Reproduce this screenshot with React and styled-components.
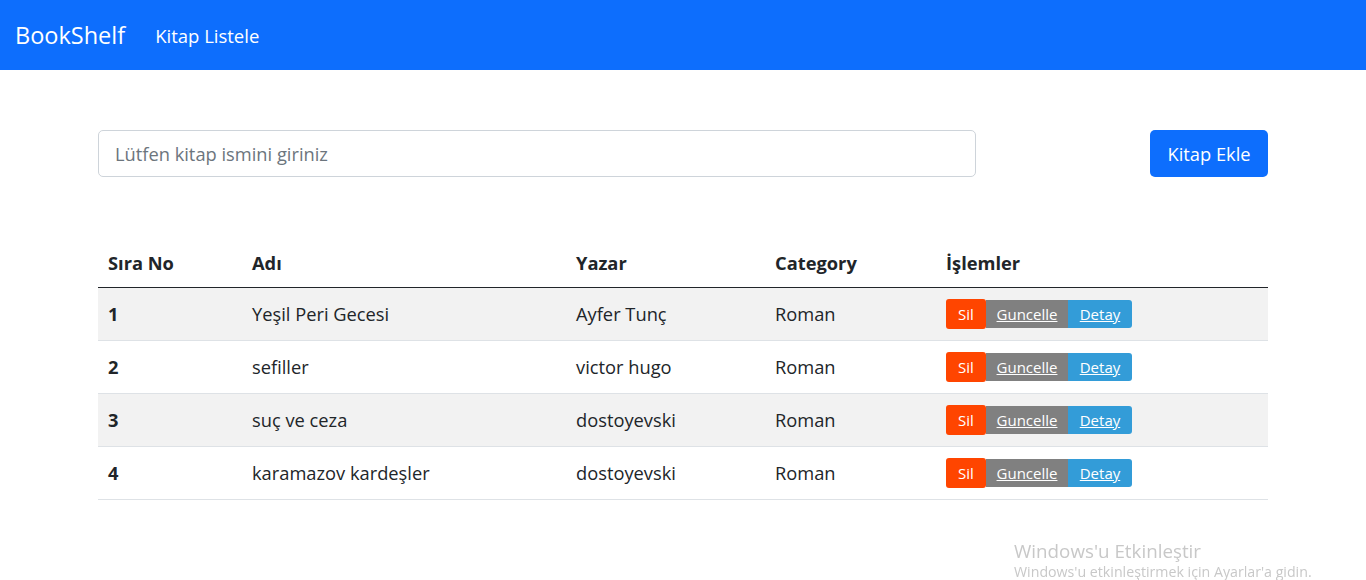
import React, { useState } from 'react';
import styled, { createGlobalStyle } from 'styled-components';

const GlobalStyle = createGlobalStyle`
  body {
    margin: 0;
    font-family: "Open Sans", "Noto Sans", sans-serif;
    color: #212529;
    background: #fff;
  }
`;

const Navbar = styled('nav')`
  height: 70px;
  background: #0d6efd;
  display: flex;
  align-items: center;
  padding: 0 15px;
  gap: 30px;
`;

const Brand = styled('span')`
  color: #fff;
  font-size: 23.5px;
`;

const NavLink = styled('span')`
  color: #fff;
  font-size: 18.5px;
`;

const Container = styled('div')`
  width: 1170px;
  margin: 60px auto 0;
`;

const SearchRow = styled('div')`
  display: flex;
  justify-content: space-between;
  align-items: center;
`;

const SearchInput = styled('input')`
  width: 878px;
  height: 47px;
  box-sizing: border-box;
  border: 1px solid #ced4da;
  border-radius: 5px;
  padding: 0 16px;
  font-family: inherit;
  font-size: 18.3px;
  color: #212529;
  outline: none;
  &::placeholder {
    color: #6c757d;
  }
`;

const AddButton = styled('button')`
  width: 118px;
  height: 47px;
  border: none;
  border-radius: 5px;
  background: #0d6efd;
  color: #fff;
  font-family: inherit;
  font-size: 18.3px;
  cursor: pointer;
`;

const Table = styled('table')`
  width: 100%;
  margin-top: 62px;
  border-collapse: collapse;
  table-layout: fixed;
  font-size: 18.3px;
`;

const Th = styled('th')`
  text-align: left;
  font-weight: 700;
  height: 48px;
  padding: 0 10px 1px;
  border-bottom: 1.5px solid #212529;
  box-sizing: border-box;
  width: ${(p) => p.$w || 'auto'};
`;

const Tr = styled('tr')`
  background: ${(p) => (p.$striped ? '#f2f2f2' : '#fff')};
`;

const Td = styled('td')`
  height: 52px;
  padding: 0 10px;
  border-bottom: 1px solid #dee2e6;
  font-weight: ${(p) => (p.$bold ? 700 : 400)};
`;

const Actions = styled('div')`
  display: flex;
  align-items: center;
`;

const ActionButton = styled('a')`
  display: inline-flex;
  align-items: center;
  justify-content: center;
  height: ${(p) => (p.$tall ? '30px' : '28px')};
  width: ${(p) => p.$w};
  box-sizing: border-box;
  background: ${(p) => p.$bg};
  color: #fff;
  font-size: 15px;
  border-radius: ${(p) => p.$radius};
  text-decoration: ${(p) => (p.$underline ? 'underline' : 'none')};
  cursor: pointer;
`;

const Watermark = styled('div')`
  position: fixed;
  left: 1014px;
  bottom: 0;
  color: #c8c8c8;
  font-family: "Open Sans", sans-serif;
  line-height: 1.2;
`;

const WatermarkTitle = styled('div')`
  font-size: 18.8px;
`;

const WatermarkSub = styled('div')`
  font-size: 14.2px;
  white-space: nowrap;
`;

const books = [
  { id: 1, name: 'Yeşil Peri Gecesi', author: 'Ayfer Tunç', category: 'Roman' },
  { id: 2, name: 'sefiller', author: 'victor hugo', category: 'Roman' },
  { id: 3, name: 'suç ve ceza', author: 'dostoyevski', category: 'Roman' },
  { id: 4, name: 'karamazov kardeşler', author: 'dostoyevski', category: 'Roman' },
];

const App = () => {
  const [query, setQuery] = useState('');
  return (
    <>
      <GlobalStyle />
      <Navbar>
        <Brand>BookShelf</Brand>
        <NavLink>Kitap Listele</NavLink>
      </Navbar>
      <Container>
        <SearchRow>
          <SearchInput
            placeholder="Lütfen kitap ismini giriniz"
            value={query}
            onChange={(e) => setQuery(e.target.value)}
          />
          <AddButton>Kitap Ekle</AddButton>
        </SearchRow>
        <Table>
          <thead>
            <tr>
              <Th $w="144px">Sıra No</Th>
              <Th $w="324px">Adı</Th>
              <Th $w="199px">Yazar</Th>
              <Th $w="171px">Category</Th>
              <Th>İşlemler</Th>
            </tr>
          </thead>
          <tbody>
            {books.map((b, i) => (
              <Tr key={b.id} $striped={i % 2 === 0}>
                <Td $bold>{b.id}</Td>
                <Td>{b.name}</Td>
                <Td>{b.author}</Td>
                <Td>{b.category}</Td>
                <Td>
                  <Actions>
                    <ActionButton $bg="#ff4500" $w="40px" $radius="3px" $tall>Sil</ActionButton>
                    <ActionButton $bg="#808080" $w="82px" $radius="0" $underline>Guncelle</ActionButton>
                    <ActionButton $bg="#339cd8" $w="64px" $radius="0 3px 3px 0" $underline>Detay</ActionButton>
                  </Actions>
                </Td>
              </Tr>
            ))}
          </tbody>
        </Table>
      </Container>
      <Watermark>
        <WatermarkTitle>Windows'u Etkinleştir</WatermarkTitle>
        <WatermarkSub>Windows'u etkinleştirmek için Ayarlar'a gidin.</WatermarkSub>
      </Watermark>
    </>
  );
};

export default App;
